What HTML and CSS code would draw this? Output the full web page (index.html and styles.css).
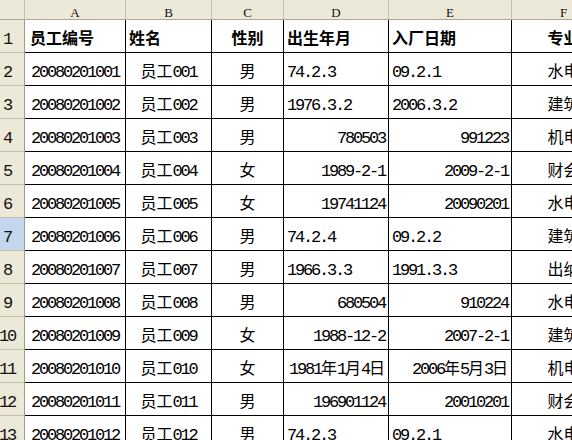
FILE: index.html
```html
<!DOCTYPE html>
<html lang="zh">
<head>
<meta charset="utf-8">
<title>员工信息表</title>
<link rel="stylesheet" href="styles.css">
</head>
<body>
<div class="sheet">
  <div class="ch corner"></div>
  <div class="ch">A</div>
  <div class="ch">B</div>
  <div class="ch">C</div>
  <div class="ch">D</div>
  <div class="ch">E</div>
  <div class="ch">F</div>

  <div class="rh m">1</div>
  <div class="cell b hdA">员工编号</div>
  <div class="cell b">姓名</div>
  <div class="cell b c">性别</div>
  <div class="cell b">出生年月</div>
  <div class="cell b">入厂日期</div>
  <div class="cell b c">专业</div>

  <div class="rh m">2</div>
  <div class="cell c m">20080201001</div>
  <div class="cell c">员工<span class="m">001</span></div>
  <div class="cell c">男</div>
  <div class="cell m">74.2.3</div>
  <div class="cell m">09.2.1</div>
  <div class="cell c">水电</div>

  <div class="rh m">3</div>
  <div class="cell c m">20080201002</div>
  <div class="cell c">员工<span class="m">002</span></div>
  <div class="cell c">男</div>
  <div class="cell m">1976.3.2</div>
  <div class="cell m">2006.3.2</div>
  <div class="cell c">建筑</div>

  <div class="rh m">4</div>
  <div class="cell c m">20080201003</div>
  <div class="cell c">员工<span class="m">003</span></div>
  <div class="cell c">男</div>
  <div class="cell r m">780503</div>
  <div class="cell r m">991223</div>
  <div class="cell c">机电</div>

  <div class="rh m">5</div>
  <div class="cell c m">20080201004</div>
  <div class="cell c">员工<span class="m">004</span></div>
  <div class="cell c">女</div>
  <div class="cell r m">1989-2-1</div>
  <div class="cell r m">2009-2-1</div>
  <div class="cell c">财会</div>

  <div class="rh m">6</div>
  <div class="cell c m">20080201005</div>
  <div class="cell c">员工<span class="m">005</span></div>
  <div class="cell c">女</div>
  <div class="cell r m">19741124</div>
  <div class="cell r m">20090201</div>
  <div class="cell c">水电</div>

  <div class="rh m sel">7</div>
  <div class="cell c m">20080201006</div>
  <div class="cell c">员工<span class="m">006</span></div>
  <div class="cell c">男</div>
  <div class="cell m">74.2.4</div>
  <div class="cell m">09.2.2</div>
  <div class="cell c">建筑</div>

  <div class="rh m">8</div>
  <div class="cell c m">20080201007</div>
  <div class="cell c">员工<span class="m">007</span></div>
  <div class="cell c">男</div>
  <div class="cell m">1966.3.3</div>
  <div class="cell m">1991.3.3</div>
  <div class="cell c">出纳</div>

  <div class="rh m">9</div>
  <div class="cell c m">20080201008</div>
  <div class="cell c">员工<span class="m">008</span></div>
  <div class="cell c">男</div>
  <div class="cell r m">680504</div>
  <div class="cell r m">910224</div>
  <div class="cell c">水电</div>

  <div class="rh m">10</div>
  <div class="cell c m">20080201009</div>
  <div class="cell c">员工<span class="m">009</span></div>
  <div class="cell c">女</div>
  <div class="cell r m">1988-12-2</div>
  <div class="cell r m">2007-2-1</div>
  <div class="cell c">建筑</div>

  <div class="rh m">11</div>
  <div class="cell c m">20080201010</div>
  <div class="cell c">员工<span class="m">010</span></div>
  <div class="cell c">女</div>
  <div class="cell r"><span class="m">1981</span>年<span class="m">1</span>月<span class="m">4</span>日</div>
  <div class="cell r"><span class="m">2006</span>年<span class="m">5</span>月<span class="m">3</span>日</div>
  <div class="cell c">机电</div>

  <div class="rh m">12</div>
  <div class="cell c m">20080201011</div>
  <div class="cell c">员工<span class="m">011</span></div>
  <div class="cell c">男</div>
  <div class="cell r m">196901124</div>
  <div class="cell r m">20010201</div>
  <div class="cell c">财会</div>

  <div class="rh m">13</div>
  <div class="cell c m">20080201012</div>
  <div class="cell c">员工<span class="m">012</span></div>
  <div class="cell c">男</div>
  <div class="cell m">74.2.3</div>
  <div class="cell m">09.2.1</div>
  <div class="cell c">水电</div>
</div>
</body>
</html>
```

FILE: styles.css
```css
html, body {
  margin: 0;
  padding: 0;
  background: #ffffff;
  overflow: hidden;
}

.sheet {
  display: grid;
  grid-template-columns: 25px 101px 86px 72px 105px 123px 104px;
  grid-template-rows: 20px repeat(13, 33px);
  width: 616px;
  font-family: "Liberation Mono", "Noto Sans CJK SC", monospace;
  font-size: 16px;
  color: #000;
}

.ch {
  box-sizing: border-box;
  background: #ece9d8;
  border-right: 1px solid #c5c2b2;
  border-bottom: 1px solid #aca899;
  font-family: "Liberation Serif", serif;
  font-size: 13px;
  line-height: 15px;
  padding-top: 5px;
  text-align: center;
  color: #111;
  overflow: hidden;
}

.rh {
  box-sizing: border-box;
  background: #ece9d8;
  border-right: 1px solid #9d9a8b;
  border-bottom: 1px solid #c5c2b2;
  display: flex;
  align-items: flex-end;
  justify-content: center;
  padding: 0 10px 3px 0;
  line-height: 18px;
  white-space: nowrap;
  color: #111;
}

.rh.sel {
  background: #c4d5ee;
}

.cell {
  box-sizing: border-box;
  border-right: 1px solid #000;
  border-bottom: 1px solid #000;
  display: flex;
  align-items: flex-end;
  justify-content: flex-start;
  padding: 0 3px 3px 3px;
  line-height: 18px;
  white-space: nowrap;
  overflow: hidden;
}

.cell.c { justify-content: center; }
.cell.r { justify-content: flex-end; }

.b { font-weight: bold; }
.hdA { padding-left: 5px; }

.m {
  font-size: 17px;
  letter-spacing: -2.2px;
}
```
